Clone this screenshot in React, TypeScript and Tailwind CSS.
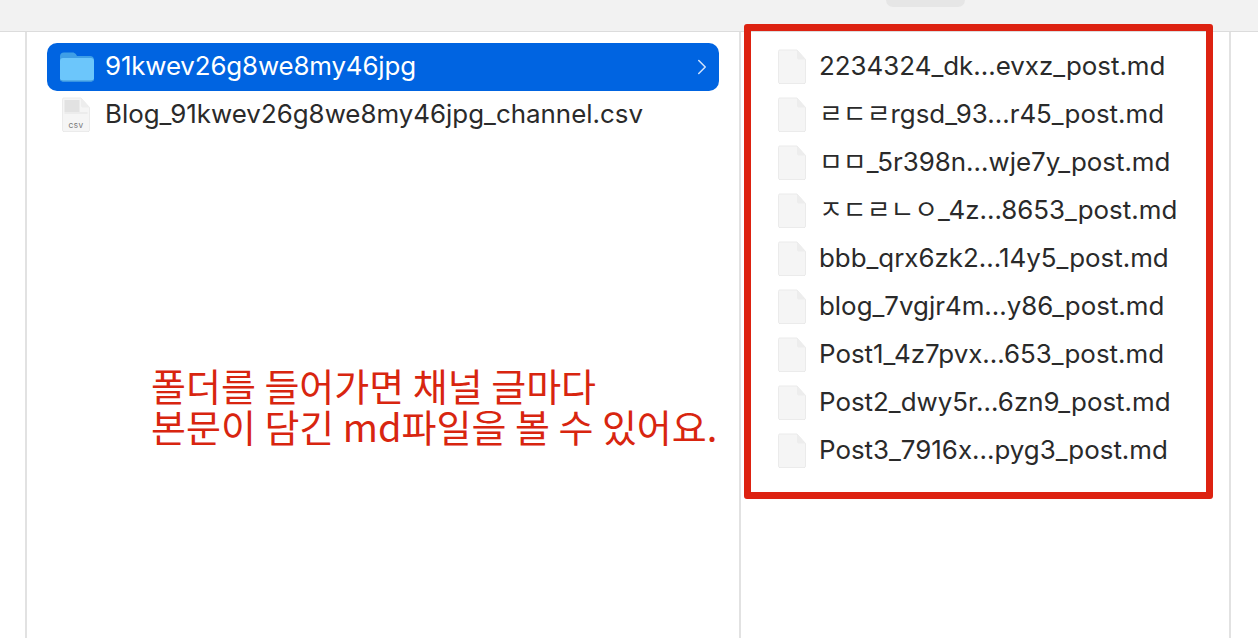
import React from 'react';
import { ChevronRight } from 'lucide-react';

const files = [
  '2234324_dk...evxz_post.md',
  'ㄹㄷㄹrgsd_93...r45_post.md',
  'ㅁㅁ_5r398n...wje7y_post.md',
  'ㅈㄷㄹㄴㅇ_4z...8653_post.md',
  'bbb_qrx6zk2...14y5_post.md',
  'blog_7vgjr4m...y86_post.md',
  'Post1_4z7pvx...653_post.md',
  'Post2_dwy5r...6zn9_post.md',
  'Post3_7916x...pyg3_post.md',
];

function FolderIcon() {
  return (
    <svg width="36" height="32" viewBox="0 0 36 32" className="shrink-0">
      <path d="M1 5.500C1 3 2.500 1.500 5 1.500h8.500c1.500 0 2.300.5 3.300 1.600L18 5h13c2.500 0 4 1.400 4 4v4H1z" fill="#3f9fe6" />
      <path d="M1 10c0-1.800 1.200-3 3-3h28c1.800 0 3 1.200 3 3v17.500c0 1.800-1.200 3-3 3H4c-1.800 0-3-1.200-3-3z" fill="#6cc6fb" />
      <path d="M1 27.500v.5c0 1.600 1.200 2.500 3 2.500h28c1.800 0 3-.9 3-2.500v-.5c0 1.300-1.200 2-3 2H4c-1.800 0-3-.7-3-2z" fill="#3a94d8" />
    </svg>
  );
}

function FileIcon({ csv }: { csv?: boolean }) {
  return (
    <svg width="30" height="36" viewBox="0 0 30 36" className="shrink-0">
      <path d="M2 34.500h26" stroke="#d4d4d4" strokeWidth="1" />
      <path d="M1.500 2.500C1.500 1.500 2 1 3 1h17l8.500 9.500V33c0 1-.5 1.500-1.500 1.500H3c-1 0-1.500-.5-1.500-1.500z" fill="#f5f5f5" stroke="#ebebeb" strokeWidth="1" />
      <path d="M20 1v7.500c0 1 .5 2 1.500 2h7z" fill="#ededed" />
      {csv && <rect x="3.500" y="3" width="15" height="12" fill="#e2e2e2" />}
      {csv && <rect x="3.500" y="15" width="23" height="2" fill="#ececec" />}
      {csv && (
        <text x="15" y="31" textAnchor="middle" fontSize="6.500" fontWeight="500" letterSpacing="0.5" fill="#777" fontFamily="Inter, sans-serif">
          CSV
        </text>
      )}
    </svg>
  );
}

export default function App() {
  return (
    <div className="relative h-[638px] w-[1258px] overflow-hidden bg-white font-['Inter','Noto_Sans_CJK_KR',sans-serif] text-[25.900px] text-[#2a2a2a]">
      <div className="relative h-[32px] border-b border-[#dcdcdc] bg-[#f2f2f2]">
        <div className="absolute left-[886px] top-0 h-[7px] w-[79px] rounded-b-[8px] bg-[#e6e6e6]" />
      </div>

      <div className="flex h-[606px]">
        <div className="w-[27px] shrink-0 border-r-2 border-[#e2e2e2]" />

        <div className="w-[714px] shrink-0 border-r-2 border-[#e2e2e2] pl-[20px] pr-[20px] pt-[11px]">
          <div className="flex h-[48px] items-center rounded-[10px] bg-[#0064e1] pl-[12px] pr-[4px] text-white">
            <FolderIcon />
            <span className="ml-[10px] mb-[2px] flex-1 tracking-[-0.15px]">91kwev26g8we8my46jpg</span>
            <ChevronRight size={26} strokeWidth={1.400} className="text-[#cfe2fb]" />
          </div>
          <div className="flex h-[48px] items-center pl-[14px]">
            <FileIcon csv />
            <span className="ml-[14px] mb-[2px]">Blog_91kwev26g8we8my46jpg_channel.csv</span>
          </div>
        </div>

        <div className="w-[490px] shrink-0 border-r-2 border-[#e2e2e2] pl-[36px] pt-[11px]">
          {files.map((name) => (
            <div key={name} className="flex h-[48px] items-center">
              <FileIcon />
              <span className="ml-[12px] mb-[2px] whitespace-nowrap">{name}</span>
            </div>
          ))}
        </div>
      </div>

      <div className="absolute left-[744px] top-[24px] h-[475px] w-[469px] rounded-[3px] border-[7px] border-[#dd2211]" />

      <div className="absolute left-[151px] top-[364px] whitespace-nowrap font-['Noto_Sans_CJK_KR',sans-serif] text-[38px] leading-[41px] text-[#d8250f]">
        <p>폴더를 들어가면 채널 글마다</p>
        <p>본문이 담긴 md파일을 볼 수 있어요.</p>
      </div>
    </div>
  );
}
